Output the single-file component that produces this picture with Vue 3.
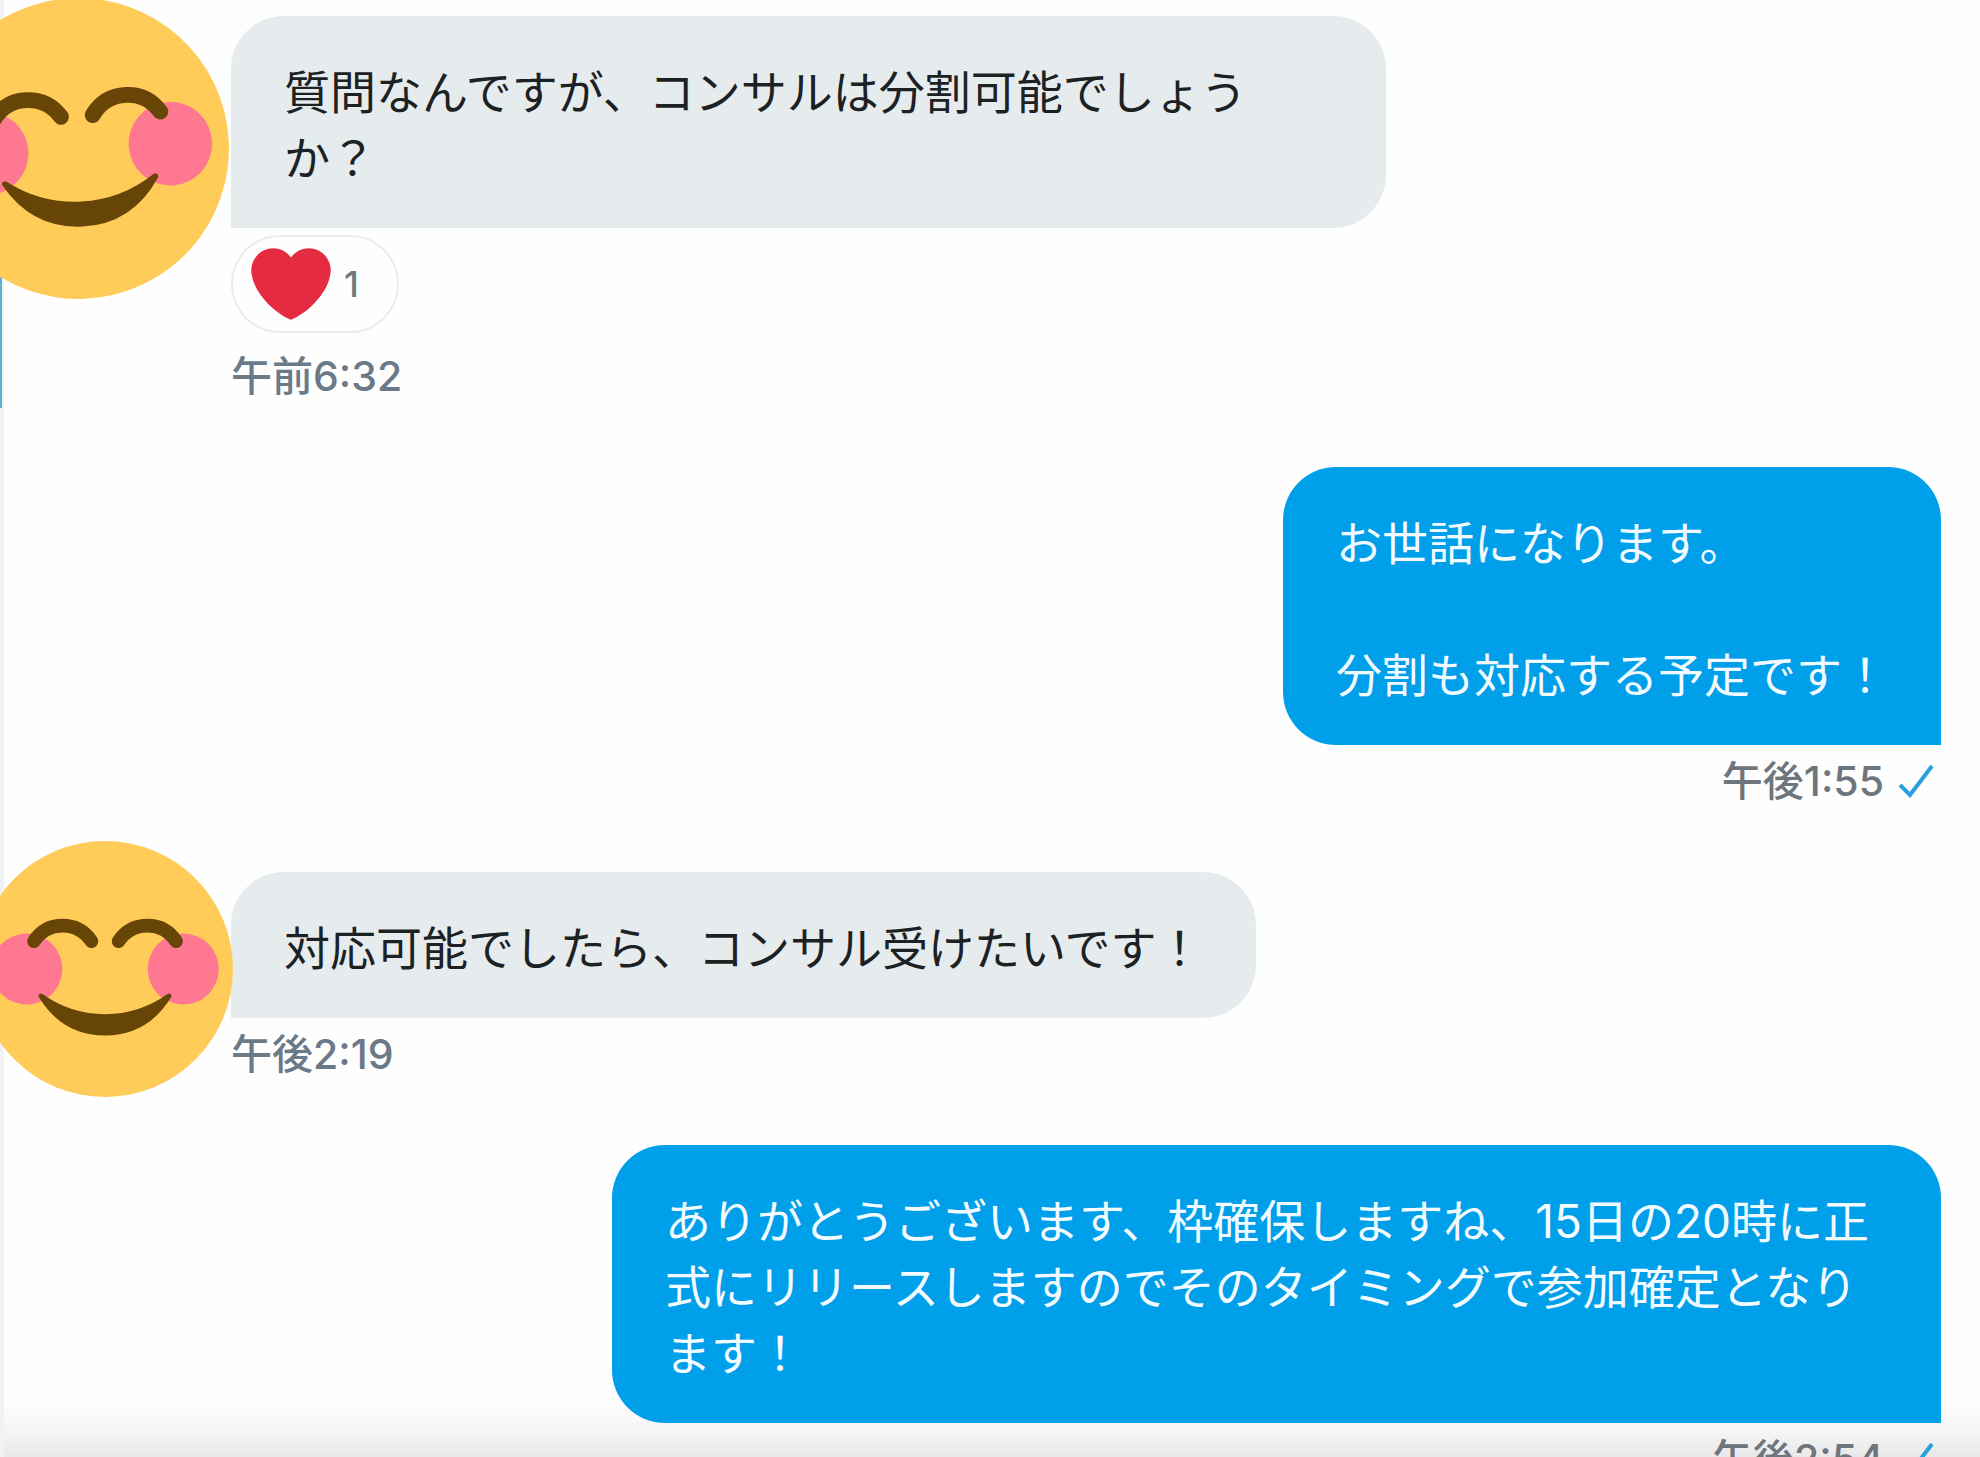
<script setup>
import { ref } from 'vue';

const messages = ref([
  { id: 1, side: 'incoming', avatar: 'large', text: '質問なんですが、コンサルは分割可能でしょうか？', time: '午前6:32', likes: 1 },
  { id: 2, side: 'outgoing', text: 'お世話になります。\n\n分割も対応する予定です！', time: '午後1:55' },
  { id: 3, side: 'incoming', avatar: 'small', text: '対応可能でしたら、コンサル受けたいです！', time: '午後2:19' },
  { id: 4, side: 'outgoing', text: 'ありがとうございます、枠確保しますね、15日の20時に正式にリリースしますのでそのタイミングで参加確定となります！', time: '午後2:54' }
]);
</script>

<template>
  <main class="conversation">
    <div class="edge"></div>
    <div class="scroll-mark"></div>

    <article v-for="msg in messages" :key="msg.id" class="message" :class="msg.side">
      <svg v-if="msg.avatar" class="avatar" :class="msg.avatar" viewBox="0 0 36 36" aria-hidden="true">
        <circle cx="18" cy="18" r="18" fill="#ffcc5a" />
        <circle cx="7" cy="18" r="5" fill="#ff7892" />
        <circle cx="29" cy="18" r="5" fill="#ff7892" />
        <g fill="none" stroke="#664507" stroke-width="1.9" stroke-linecap="round">
          <path d="M8 14.1C9 12.6 10.4 11.9 12 11.9S15.1 12.6 16.1 14.1" />
          <path d="M19.9 14.1C20.9 12.6 22.3 11.9 24 11.9S27 12.6 28 14.1" />
        </g>
        <path
          d="M9 21.8C11.8 23.8 14.6 24.7 18 24.7S24.2 23.8 27 21.8C24.9 25.2 21.8 27 18 27S11.1 25.2 9 21.8Z"
          fill="#664507" stroke="#664507" stroke-width=".7" stroke-linejoin="round"
        />
      </svg>

      <p class="bubble">{{ msg.text }}</p>

      <button v-if="msg.likes" class="reaction" type="button">
        <svg class="heart" viewBox="0 1.9 36 32.2" aria-hidden="true">
          <path fill="#e42b42" d="M35.885 11.833c0-5.45-4.418-9.868-9.867-9.868-3.308 0-6.227 1.633-8.018 4.129-1.791-2.496-4.71-4.129-8.017-4.129-5.45 0-9.868 4.417-9.868 9.868 0 .772.098 1.52.266 2.241C1.751 22.587 11.216 31.568 18 34.034c6.783-2.466 16.249-11.447 17.617-19.959.17-.721.268-1.469.268-2.242z" />
        </svg>
        <span>{{ msg.likes }}</span>
      </button>

      <div class="meta">
        <time>{{ msg.time }}</time>
        <svg v-if="msg.side === 'outgoing'" class="check" viewBox="0 0 36 34" aria-hidden="true">
          <path d="M2 21L12 31L34 2" fill="none" stroke="#2a9fdc" stroke-width="4" />
        </svg>
      </div>
    </article>
  </main>
</template>

<style>
body { margin: 0; }
</style>

<style scoped>
.conversation {
  position: relative; box-sizing: border-box; height: 100vh; overflow: hidden;
  display: flex; flex-direction: column; gap: 63px;
  padding: 16px 39px 0 231px;
  /* Schaduw van de invoerbalk onderaan */
  background: linear-gradient(to top, #e8e8e8, #f6f6f6 28px, #fefefe 58px);
  font-family: Inter, "Noto Sans CJK JP", sans-serif;
}
.edge { position: absolute; left: 0; top: 0; bottom: 0; width: 4px; background: #f0f2f4; }
.scroll-mark { position: absolute; left: 0; top: 277px; width: 2px; height: 131px; background: #5fb0d0; }

.message { position: relative; flex: none; display: flex; flex-direction: column; align-items: flex-start; }
.message.outgoing { align-items: flex-end; }

.bubble {
  box-sizing: border-box; margin: 0; padding: 43px 53px 37px;
  font-size: 46px; line-height: 66px; white-space: pre-wrap;
}
.incoming .bubble {
  max-width: calc(100% - 555px);
  background: #e6ebed; color: #1c2124;
  border-radius: 53px 53px 53px 0;
}
.outgoing .bubble {
  max-width: calc(100% - 381px);
  background: #009fea; color: #f2fbff;
  border-radius: 53px 53px 0 53px;
}

/* Avatars vallen deels over de bubbel en buiten beeld */
.avatar { position: absolute; z-index: 1; }
.avatar.large { left: -303px; top: -18px; width: 301px; height: 301px; transform: rotate(-3deg); }
.avatar.small { left: -254px; top: -31px; width: 256px; height: 256px; }

.reaction {
  box-sizing: border-box; height: 98px; margin: 7px 0; padding: 0 38px 0 18px;
  display: flex; align-items: center; gap: 13px;
  background: #fefefe; border: 2px solid #ececf0; border-radius: 49px;
  font: 500 36px Inter, sans-serif; color: #727a80; cursor: pointer;
}
.heart { width: 80px; height: 72px; }

.meta {
  display: flex; align-items: center; gap: 14px; margin-top: 8px;
  font-size: 41px; font-weight: 500; line-height: 56px; color: #6b7a88;
}
.outgoing .meta { padding-right: 7px; color: #6f757c; }
.check { width: 36px; height: 34px; }
</style>
